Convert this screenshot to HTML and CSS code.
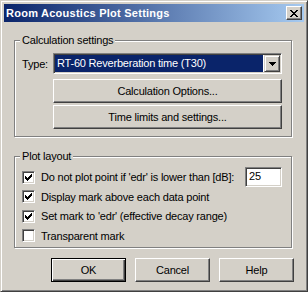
FILE: index.html
```html
<!doctype html>
<html lang="en">
<head>
    <meta charset="UTF-8">
    <title>Room Acoustics Plot Settings</title>
    <link rel="stylesheet" href="styles.css">
</head>
<body>
<div class="dialog">
    <div class="titleBar">
        <span class="title">Room Acoustics Plot Settings</span>
        <button class="closeButton">
            <svg width="8" height="7" viewBox="0 0 8 7" shape-rendering="crispEdges">
                <path fill="#000" d="M0 0h2v1h-2zM6 0h2v1h-2zM1 1h2v1h-2zM5 1h2v1h-2zM2 2h4v1h-4zM3 3h2v1h-2zM2 4h4v1h-4zM1 5h2v1h-2zM5 5h2v1h-2zM0 6h2v1h-2zM6 6h2v1h-2z"/>
            </svg>
        </button>
    </div>
    <div class="dialogBody">
        <fieldset class="group calcGroup">
            <legend>Calculation settings</legend>
            <div class="typeRow">
                <span class="typeLabel">Type:</span>
                <div class="combo">
                    <span class="comboText">RT-60 Reverberation time (T30)</span>
                    <span class="comboButton">
                        <svg width="7" height="4" viewBox="0 0 7 4" shape-rendering="crispEdges">
                            <path fill="#000" d="M0 0h7v1h-7zM1 1h5v1h-5zM2 2h3v1h-3zM3 3h1v1h-1z"/>
                        </svg>
                    </span>
                </div>
            </div>
            <button class="btn wideButton">Calculation Options...</button>
            <button class="btn wideButton">Time limits and settings...</button>
        </fieldset>

        <fieldset class="group plotGroup">
            <legend>Plot layout</legend>
            <div class="checkRow row1">
                <span class="checkBox checked"></span>
                <span class="checkText">Do not plot point if 'edr' is lower than [dB]:</span>
                <span class="editBox">25</span>
            </div>
            <div class="checkRow row2">
                <span class="checkBox checked"></span>
                <span class="checkText">Display mark above each data point</span>
            </div>
            <div class="checkRow row3">
                <span class="checkBox checked"></span>
                <span class="checkText">Set mark to 'edr' (effective decay range)</span>
            </div>
            <div class="checkRow row4">
                <span class="checkBox"></span>
                <span class="checkText">Transparent mark</span>
            </div>
        </fieldset>

        <div class="dialogButtons">
            <button class="btn defaultButton">OK</button>
            <button class="btn">Cancel</button>
            <button class="btn">Help</button>
        </div>
    </div>
</div>
</body>
</html>
```

FILE: styles.css
```css
body {
    margin: 0;
    background: #d4d0c8;
    font-family: "Liberation Sans", Arial, sans-serif;
    font-size: 11px;
    letter-spacing: -0.2px;
    color: #000;
}

.dialog {
    width: 308px;
    height: 292px;
    box-sizing: border-box;
    padding: 3px;
    background: #d4d0c8;
    border: 1px solid;
    border-color: #d4d0c8 #404040 #404040 #d4d0c8;
    box-shadow: inset 1px 1px #fff, inset -1px -1px #808080;
}

.titleBar {
    height: 18px;
    display: flex;
    align-items: center;
    justify-content: space-between;
    padding: 0 2px 0 2px;
    background: linear-gradient(to right, #0a246a, #a6caf0);
}

.title {
    color: #fff;
    font-weight: bold;
    font-size: 11px;
    letter-spacing: 0.25px;
    line-height: 13px;
}

.closeButton {
    width: 16px;
    height: 14px;
    padding: 0;
    margin: 0;
    display: flex;
    align-items: center;
    justify-content: center;
    background: #d4d0c8;
    border: 1px solid;
    border-color: #fff #404040 #404040 #fff;
    box-shadow: inset -1px -1px #808080;
}

.dialogBody {
    padding: 0 12px 0 10px;
}

.group {
    margin: 0;
    padding: 0 9px 0 7px;
    border: 1px solid #808080;
    box-shadow: inset 1px 1px #fff, 1px 1px #fff;
    min-width: 0;
}

.group legend {
    margin-left: -2px;
    padding: 0 2px;
    line-height: 13px;
    background: #d4d0c8;
}

.calcGroup {
    margin-top: 12px;
    padding-top: 6px;
    padding-bottom: 7px;
}

.typeRow {
    display: flex;
    align-items: center;
    height: 21px;
}

.typeLabel {
    width: 31px;
}

.combo {
    flex: 1;
    height: 21px;
    box-sizing: border-box;
    display: flex;
    padding: 1px;
    background: #fff;
    border: 1px solid;
    border-color: #808080 #fff #fff #808080;
    box-shadow: inset 1px 1px #404040, inset -1px -1px #d4d0c8;
}

.comboText {
    flex: 1;
    margin-right: 1px;
    padding-left: 2px;
    background: #0a246a;
    color: #fff;
    line-height: 17px;
}

.comboButton {
    width: 16px;
    height: 17px;
    box-sizing: border-box;
    display: flex;
    align-items: center;
    justify-content: center;
    background: #d4d0c8;
    border: 1px solid;
    border-color: #d4d0c8 #404040 #404040 #d4d0c8;
    box-shadow: inset 1px 1px #fff, inset -1px -1px #808080;
}

.btn {
    width: 75px;
    height: 24px;
    margin: 0;
    padding: 0;
    font-family: inherit;
    font-size: 11px;
    letter-spacing: -0.2px;
    color: #000;
    background: #d4d0c8;
    border: 1px solid;
    border-color: #fff #404040 #404040 #fff;
    box-shadow: inset -1px -1px #808080;
}

.wideButton {
    display: block;
    margin-left: 31px;
    width: calc(100% - 31px);
}

.wideButton + .wideButton {
    margin-top: 2px;
}

.typeRow + .wideButton {
    margin-top: 5px;
}

.plotGroup {
    margin-top: 13px;
    padding-top: 4px;
    padding-bottom: 2px;
}

.checkRow {
    display: flex;
    align-items: center;
    height: 19px;
}

.row1, .row3 {
    height: 20px;
}

.checkBox {
    width: 13px;
    height: 13px;
    box-sizing: border-box;
    margin-right: 6px;
    background: #fff;
    border: 1px solid;
    border-color: #808080 #fff #fff #808080;
    box-shadow: inset 1px 1px #404040, inset -1px -1px #d4d0c8;
}

.checkBox.checked {
    background: #fff url("data:image/svg+xml,%3Csvg xmlns='http://www.w3.org/2000/svg' width='7' height='7' shape-rendering='crispEdges'%3E%3Cpath d='M6 0h1v1h-1zM5 1h2v1h-2zM0 2h1v1h-1zM4 2h3v1h-3zM0 3h2v1h-2zM3 3h3v1h-3zM0 4h5v1h-5zM1 5h3v1h-3zM2 6h1v1h-1z'/%3E%3C/svg%3E") no-repeat 2px 2px;
}

.checkText {
    white-space: nowrap;
}

.editBox {
    margin-left: auto;
    width: 37px;
    height: 20px;
    box-sizing: border-box;
    padding-left: 3px;
    line-height: 16px;
    background: #fff;
    border: 1px solid;
    border-color: #808080 #fff #fff #808080;
    box-shadow: inset 1px 1px #404040, inset -1px -1px #d4d0c8;
}

.dialogButtons {
    display: flex;
    justify-content: flex-end;
    gap: 9px;
    margin-top: 10px;
    margin-right: -2px;
}

.defaultButton {
    border: 1px solid #000;
    box-shadow: inset 1px 1px #fff, inset -1px -1px #404040, inset -2px -2px #808080;
}
```
